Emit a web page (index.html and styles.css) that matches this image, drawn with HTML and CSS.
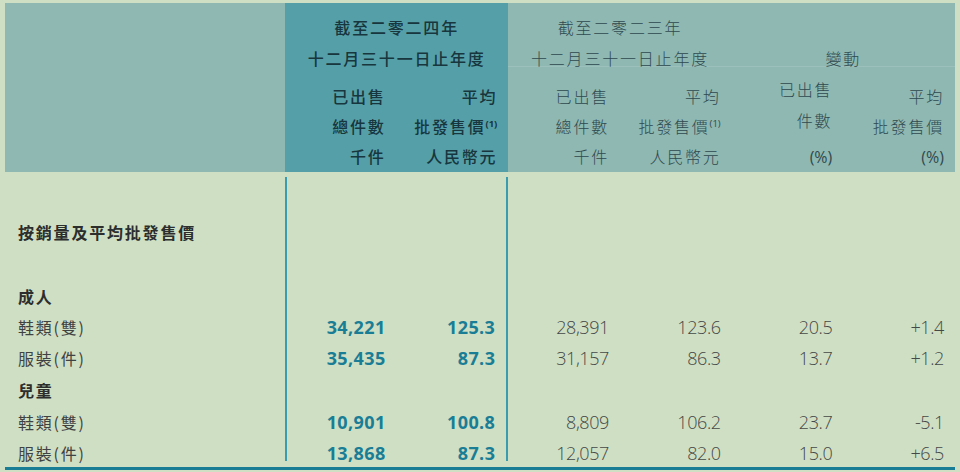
FILE: index.html
```html
<!DOCTYPE html>
<html lang="zh-Hant">
<head>
<meta charset="utf-8">
<title>按銷量及平均批發售價</title>
<link rel="stylesheet" href="styles.css">
</head>
<body>
<div class="sheet">
  <div class="thead">
    <div class="blank"></div>
    <div class="grp cur">
      <div class="t1">截至二零二四年</div>
      <div class="t2">十二月三十一日止年度</div>
      <div class="subs">
        <div class="sub">已出售<br>總件數<br>千件</div>
        <div class="sub">平均<br>批發售價<sup class="fn">(1)</sup><br>人民幣元</div>
      </div>
    </div>
    <div class="grp prev">
      <div class="t1">截至二零二三年</div>
      <div class="t2">十二月三十一日止年度</div>
      <div class="subs">
        <div class="sub">已出售<br>總件數<br>千件</div>
        <div class="sub">平均<br>批發售價<sup class="fn">(1)</sup><br>人民幣元</div>
      </div>
    </div>
    <div class="grp chg">
      <div class="t1">&nbsp;</div>
      <div class="t2">變動</div>
      <div class="subs">
        <div class="sub split"><span class="up">已出售<br>件數</span><span class="pct">(%)</span></div>
        <div class="sub">平均<br>批發售價<br><span class="pct">(%)</span></div>
      </div>
    </div>
  </div>

  <div class="tbody">
    <div class="row"><div class="lbl"></div><div class="n b c1"></div><div class="n b c2"></div><div class="n"></div><div class="n"></div><div class="n"></div><div class="n"></div></div>
    <div class="row"><div class="lbl sec">按銷量及平均批發售價</div><div class="n b c1"></div><div class="n b c2"></div><div class="n"></div><div class="n"></div><div class="n"></div><div class="n"></div></div>
    <div class="row"><div class="lbl"></div><div class="n b c1"></div><div class="n b c2"></div><div class="n"></div><div class="n"></div><div class="n"></div><div class="n"></div></div>
    <div class="row"><div class="lbl sec">成人</div><div class="n b c1"></div><div class="n b c2"></div><div class="n"></div><div class="n"></div><div class="n"></div><div class="n"></div></div>
    <div class="row"><div class="lbl">鞋類(雙)</div><div class="n b c1">34,221</div><div class="n b c2">125.3</div><div class="n">28,391</div><div class="n">123.6</div><div class="n">20.5</div><div class="n">+1.4</div></div>
    <div class="row"><div class="lbl">服裝(件)</div><div class="n b c1">35,435</div><div class="n b c2">87.3</div><div class="n">31,157</div><div class="n">86.3</div><div class="n">13.7</div><div class="n">+1.2</div></div>
    <div class="row"><div class="lbl sec">兒童</div><div class="n b c1"></div><div class="n b c2"></div><div class="n"></div><div class="n"></div><div class="n"></div><div class="n"></div></div>
    <div class="row"><div class="lbl">鞋類(雙)</div><div class="n b c1">10,901</div><div class="n b c2">100.8</div><div class="n">8,809</div><div class="n">106.2</div><div class="n">23.7</div><div class="n">-5.1</div></div>
    <div class="row"><div class="lbl">服裝(件)</div><div class="n b c1">13,868</div><div class="n b c2">87.3</div><div class="n">12,057</div><div class="n">82.0</div><div class="n">15.0</div><div class="n">+6.5</div></div>
  </div>
  <div class="rule"></div>
</div>
</body>
</html>
```
FILE: styles.css
```css
html, body {
  margin: 0;
  padding: 0;
  background: #cfdfc3;
}
body {
  font-family: "Noto Sans CJK TC", "Noto Sans", sans-serif;
  font-size: 16px;
  color: #3c3f3f;
}
.sheet {
  width: 950px;
  padding: 3px 5px 0 5px;
}

/* header band */
.thead {
  display: grid;
  grid-template-columns: 280px 1fr 1fr 1fr;
  height: 169px;
  background: #8fb8b2;
}
.grp {
  display: flex;
  flex-direction: column;
  text-align: center;
  letter-spacing: 1.8px;
  color: #2e4a4f;
  font-weight: 300;
}
.grp.cur {
  background: #55a0a8;
  color: #17363e;
  font-weight: 500;
}
.t1 {
  margin-top: 9px;
  line-height: 30px;
  height: 30px;
}
.t2 {
  margin-top: 8px;
  line-height: 16px;
  height: 16px;
  border-bottom: 1px solid rgba(255, 255, 255, 0.12);
}
.grp.cur .t2 {
  border-bottom-color: transparent;
}
.subs {
  display: grid;
  grid-template-columns: 1fr 1fr;
  padding-top: 14px;
}
.sub {
  text-align: right;
  padding-right: 11px;
  line-height: 30px;
}
.sub.split {
  display: flex;
  flex-direction: column;
  align-items: flex-end;
}
.sub.split .up {
  margin-top: -7px;
  line-height: 31px;
}
.sub.split .pct {
  margin-top: auto;
  line-height: 30px;
}
.pct {
  font-family: "Open Sans", "Liberation Sans", sans-serif;
  font-weight: 400;
  letter-spacing: 0;
  font-size: 16px;
}
.fn {
  font-family: "Open Sans", "Liberation Sans", sans-serif;
  font-size: 9.5px;
  line-height: 0;
  letter-spacing: 0;
  vertical-align: 6px;
  font-weight: 700;
}
.grp.prev .fn {
  font-weight: 400;
}

/* body */
.tbody {
  margin-top: 5px;
  display: grid;
  grid-template-columns: 280px repeat(6, 1fr);
  grid-template-rows: 39px 32px 32px 31px 31px 32px 32px 31px 24px;
}
.row {
  display: contents;
}
.lbl {
  padding-left: 13px;
  line-height: 32px;
  letter-spacing: 1.8px;
  color: #3f4242;
  white-space: nowrap;
}
.lbl.sec {
  font-weight: 700;
  color: #2c2e2e;
}
.n {
  text-align: right;
  padding-right: 11px;
  line-height: 32px;
  font-family: "Open Sans", "Liberation Sans", sans-serif;
  font-size: 18px;
  font-weight: 300;
  letter-spacing: -0.4px;
  color: #444847;
  white-space: nowrap;
}
.n.b {
  font-weight: 700;
  letter-spacing: 0.4px;
  color: #1a7d96;
}
.c1 {
  border-left: 2px solid #3a9cae;
}
.c2 {
  border-right: 2px solid #3a9cae;
}
.rule {
  margin-top: 6px;
  height: 3px;
  background: #1a7d96;
}
```
